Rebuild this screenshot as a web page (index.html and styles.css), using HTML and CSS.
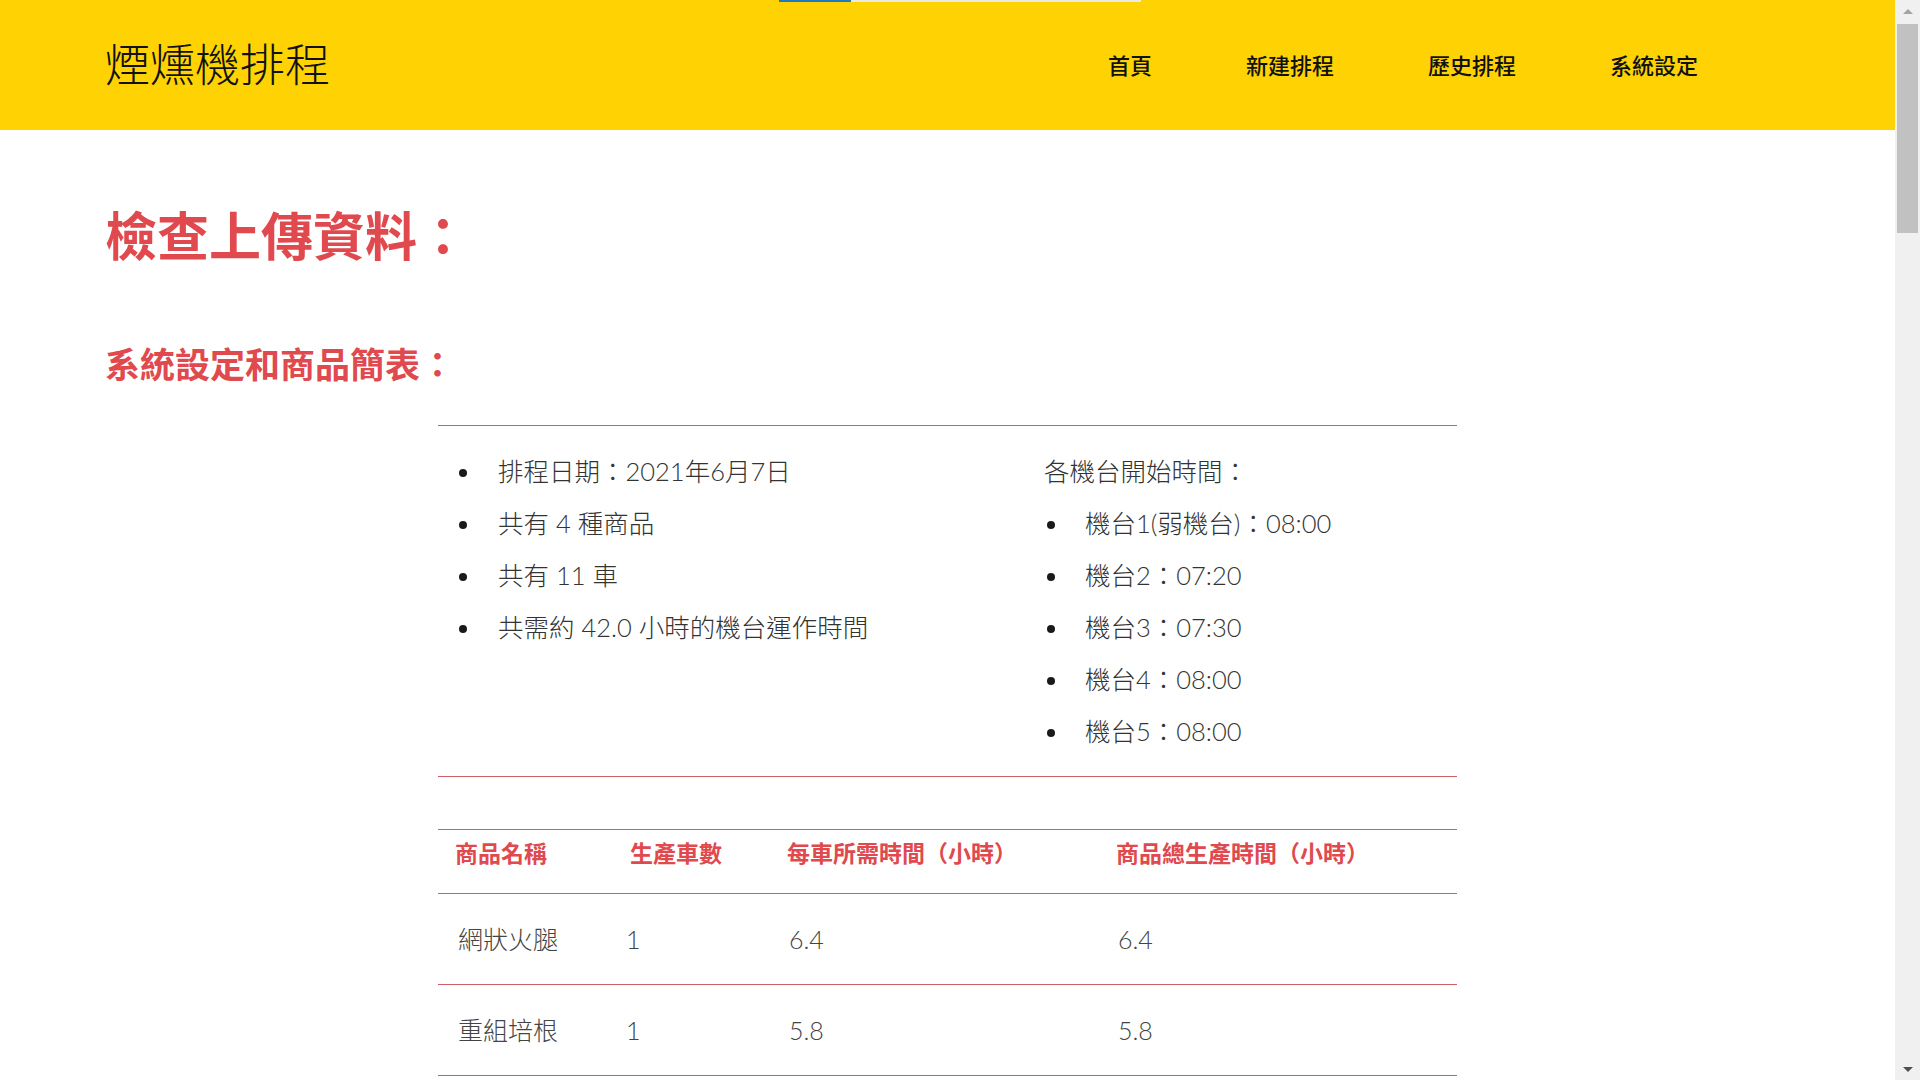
FILE: index.html
```html
<!DOCTYPE html>
<html lang="zh-Hant">
<head>
<meta charset="utf-8">
<title>煙燻機排程</title>
<link rel="stylesheet" href="styles.css">
</head>
<body>
<div class="window">
  <div class="page">
    <div class="progress"><span class="progress-fill"></span><span class="progress-rest"></span></div>
    <header class="topbar">
      <div class="logo">煙燻機排程</div>
      <nav class="nav">
        <a class="nav-link" href="#">首頁</a>
        <a class="nav-link" href="#">新建排程</a>
        <a class="nav-link" href="#">歷史排程</a>
        <a class="nav-link" href="#">系統設定</a>
      </nav>
    </header>
    <main class="main">
      <h1 class="title">檢查上傳資料：</h1>
      <h2 class="subtitle">系統設定和商品簡表：</h2>
      <section class="summary">
        <div class="summary-left">
          <ul class="dots">
            <li>排程日期：2021年6月7日</li>
            <li>共有 4 種商品</li>
            <li>共有 11 車</li>
            <li>共需約 42.0 小時的機台運作時間</li>
          </ul>
        </div>
        <div class="summary-right">
          <p class="summary-label">各機台開始時間：</p>
          <ul class="dots dots-right">
            <li>機台1(弱機台)：08:00</li>
            <li>機台2：07:20</li>
            <li>機台3：07:30</li>
            <li>機台4：08:00</li>
            <li>機台5：08:00</li>
          </ul>
        </div>
      </section>
      <table class="products">
        <colgroup>
          <col class="c1"><col class="c2"><col class="c3"><col class="c4">
        </colgroup>
        <thead>
          <tr><th>商品名稱</th><th>生產車數</th><th>每車所需時間（小時）</th><th>商品總生產時間（小時）</th></tr>
        </thead>
        <tbody>
          <tr><td>網狀火腿</td><td>1</td><td>6.4</td><td>6.4</td></tr>
          <tr><td>重組培根</td><td>1</td><td>5.8</td><td>5.8</td></tr>
        </tbody>
      </table>
    </main>
  </div>
  <div class="scrollbar">
    <div class="sb-arrow sb-up"></div>
    <div class="sb-track"><div class="sb-thumb"></div></div>
    <div class="sb-arrow sb-down"></div>
  </div>
</div>
</body>
</html>
```
FILE: styles.css
```css
html, body {
  margin: 0;
  padding: 0;
  height: 100%;
  overflow: hidden;
  background: #ffffff;
}
.window {
  display: flex;
  height: 1080px;
  width: 1920px;
}
.page {
  position: relative;
  flex: 1;
  height: 1080px;
  overflow: hidden;
  font-family: "Lato", "Noto Sans CJK TC", sans-serif;
}
.progress {
  position: absolute;
  top: 0;
  left: 779px;
  height: 2px;
  display: flex;
  z-index: 2;
}
.progress-fill { width: 72px; background: #1f7ac2; }
.progress-rest { width: 290px; background: #ebe9e3; }

.topbar {
  height: 130px;
  background: #ffd303;
  display: flex;
  align-items: center;
  padding: 0 150px 0 105px;
}
.logo {
  font-family: "Noto Sans CJK TC", sans-serif;
  font-size: 45px;
  font-weight: 300;
  color: #111;
  line-height: 50px;
  margin-top: -4px;
}
.nav {
  margin-left: auto;
  display: flex;
  margin-top: -2px;
}
.nav-link {
  font-family: "Noto Sans CJK TC", sans-serif;
  font-size: 22px;
  font-weight: 500;
  color: #111;
  text-decoration: none;
  padding: 0 47px;
  line-height: 30px;
}
.main {
  padding: 0 105px;
}
.title {
  margin: 74px 0 0;
  font-family: "Noto Sans CJK TC", sans-serif;
  font-size: 52px;
  font-weight: 700;
  line-height: 60px;
  color: #e0494e;
}
.subtitle {
  margin: 76px 0 0;
  font-family: "Noto Sans CJK TC", sans-serif;
  font-size: 35px;
  font-weight: 700;
  line-height: 45px;
  color: #e0494e;
}
.summary {
  width: 1019px;
  margin: 40px auto 0;
  border-top: 1px solid #cf5d62;
  border-bottom: 1px solid #cf5d62;
  display: grid;
  grid-template-columns: 606px 1fr;
  padding: 19px 0 19px;
  font-size: 25.5px;
  font-weight: 300;
  color: #333;
  line-height: 52px;
}
.summary-left { padding-left: 21px; }
.summary-label { margin: 0; }
.dots {
  list-style: none;
  margin: 0;
  padding: 0;
}
.dots-right { padding-left: 3px; }
.dots li::before {
  content: "";
  display: inline-block;
  width: 8px;
  height: 8px;
  border-radius: 50%;
  background: #1a1a1a;
  margin-right: 30px;
  vertical-align: middle;
  position: relative;
  top: -2px;
}
.summary-left .dots li::before { margin-right: 31px; }
.products {
  width: 1019px;
  margin: 52px auto 0;
  border-collapse: collapse;
  border-top: 1px solid #cf5d62;
  table-layout: fixed;
}
.c1 { width: 172px; }
.c2 { width: 160px; }
.c3 { width: 329px; }
.c4 { width: 358px; }
.products th {
  text-align: left;
  font-family: "Noto Sans CJK TC", sans-serif;
  font-size: 23px;
  font-weight: 700;
  color: #e0494e;
  line-height: 30px;
  padding: 7px 0 26px 17px;
  border-bottom: 1px solid #cf5d62;
}
.products td {
  font-size: 25px;
  font-weight: 300;
  color: #444;
  line-height: 30px;
  padding: 30px 0 30px 19px;
  border-bottom: 1px solid #cf5d62;
}
.products td:first-child { padding-left: 20px; }
.products th:first-child { padding-left: 17px; }
.products th:nth-child(2) { padding-left: 20px; }
.products td:nth-child(2) { padding-left: 16px; }
.scrollbar {
  width: 25px;
  height: 1080px;
  background: #f0f0f0;
  display: flex;
  flex-direction: column;
}
.sb-arrow {
  height: 22px;
  display: flex;
  align-items: center;
  justify-content: center;
}
.sb-up::before {
  content: "";
  border-left: 5px solid transparent;
  border-right: 5px solid transparent;
  border-bottom: 5px solid #a3a3a3;
}
.sb-down::before {
  content: "";
  border-left: 5px solid transparent;
  border-right: 5px solid transparent;
  border-top: 5px solid #505050;
}
.sb-track {
  flex: 1;
  padding: 2px 2px 0;
}
.sb-thumb {
  height: 209px;
  background: #c1c1c1;
}
```
